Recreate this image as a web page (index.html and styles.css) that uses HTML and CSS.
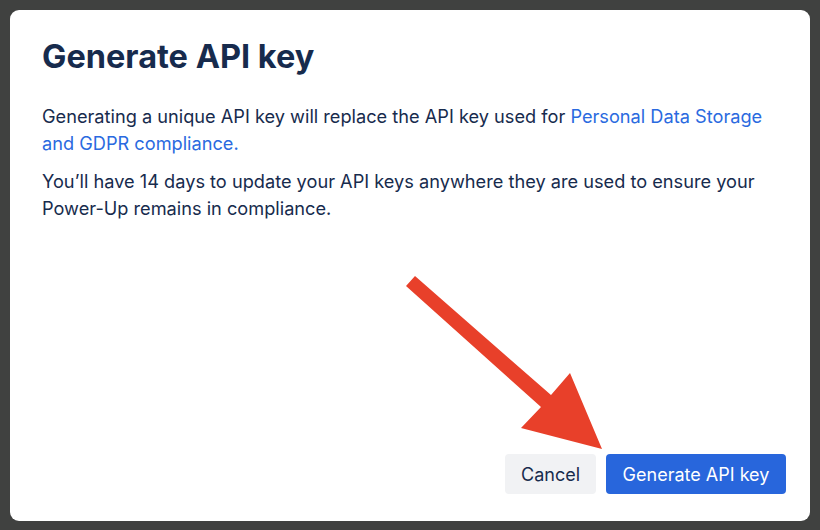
FILE: index.html
```html
<!DOCTYPE html>
<html>
<head>
<meta charset="utf-8">
<link rel="stylesheet" href="styles.css">
</head>
<body>
<div class="backdrop">
  <div class="modal">
    <h1 class="title">Generate API key</h1>
    <div class="content">
      <p>Generating a unique API key will replace the API key used for <a href="#" class="link">Personal Data Storage and GDPR compliance.</a></p>
      <p>You’ll have 14 days to update your API keys anywhere they are used to ensure your Power-Up remains in compliance.</p>
    </div>
    <div class="footer">
      <button class="btn btn-subtle">Cancel</button>
      <button class="btn btn-primary">Generate API key</button>
    </div>
  </div>
</div>
<svg class="arrow" width="820" height="530" viewBox="0 0 820 530">
  <polygon points="415,276 551,395 570,373 602,449 521,428 541,407 406,286" fill="#e8402a"/>
</svg>
</body>
</html>
```

FILE: styles.css
```css
* { box-sizing: border-box; }
html, body { margin: 0; padding: 0; }
body {
  width: 820px;
  height: 530px;
  background: #404140;
  font-family: Inter, "Noto Sans", sans-serif;
  color: #172b4d;
  position: relative;
  overflow: hidden;
}
.backdrop {
  padding: 10px;
  height: 530px;
}
.modal {
  background: #fff;
  border-radius: 9px;
  height: 511px;
  display: flex;
  flex-direction: column;
  padding: 28px 24px 27px 32px;
}
.title {
  margin: 0;
  font-size: 32.5px;
  line-height: 38px;
  font-weight: 700;
  color: #172b4d;
}
.content {
  margin-top: 27px;
  padding-right: 10px;
}
.content p {
  margin: 0 0 11px;
  font-size: 18.2px;
  line-height: 27px;
}
.link {
  color: #2a6ae0;
  text-decoration: none;
}
.footer {
  margin-top: auto;
  display: flex;
  justify-content: flex-end;
  gap: 10px;
}
.btn {
  height: 40px;
  border: none;
  border-radius: 4px;
  font-family: Inter, "Noto Sans", sans-serif;
  font-size: 18px;
  padding: 0 16px;
}
.btn-subtle {
  background: #f1f2f4;
  color: #172b4d;
  width: 91px;
}
.btn-primary {
  background: #2866dc;
  color: #fff;
  width: 180px;
}
.arrow {
  position: absolute;
  left: 0;
  top: 0;
}
```
